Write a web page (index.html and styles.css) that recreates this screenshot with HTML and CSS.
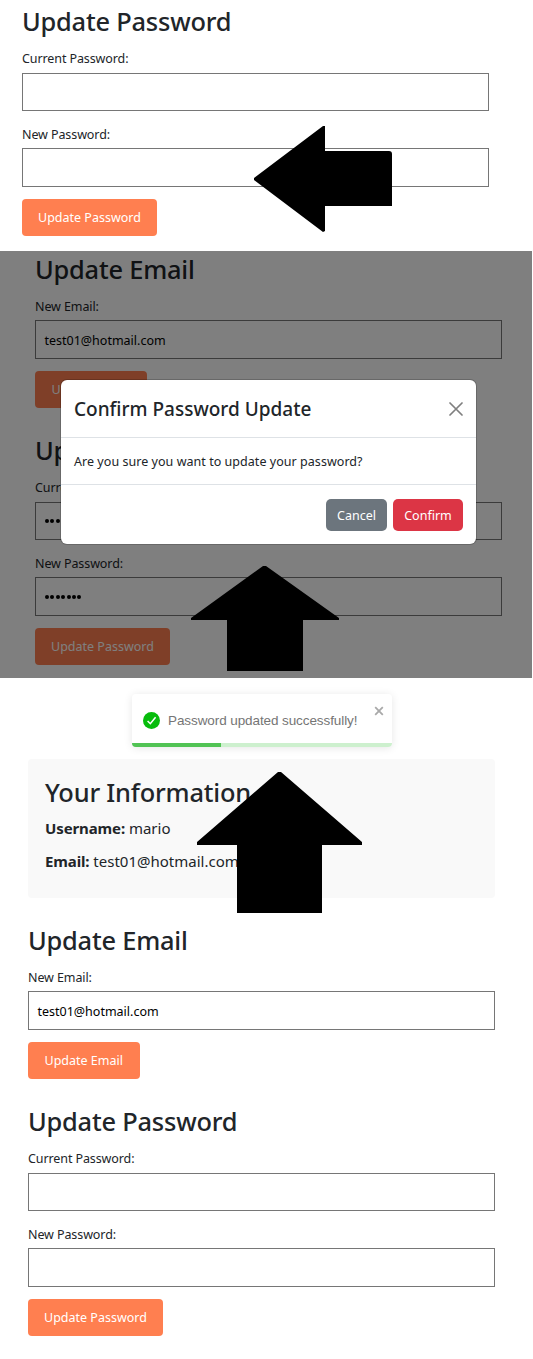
FILE: index.html
```html
<!DOCTYPE html>
<html lang="en">
<head>
<meta charset="utf-8">
<title>Account settings</title>
<link rel="stylesheet" href="styles.css">
</head>
<body>
<section class="step step-form">
  <form class="form">
    <h2 class="title">Update Password</h2>
    <label class="label">Current Password:</label>
    <div class="field field-current"></div>
    <label class="label label-next">New Password:</label>
    <div class="field"></div>
    <button class="btn" type="button">Update Password</button>
  </form>
  <svg class="arrow arrow-left" viewBox="0 0 140 110"><path d="M1 54 70 2 72 2V27H136Q139 27 139 30V82H72V107L70 108 1 56Z"/></svg>
</section>

<section class="step step-confirm">
  <form class="form">
    <h2 class="title">Update Email</h2>
    <label class="label">New Email:</label>
    <div class="field">test01@hotmail.com</div>
    <button class="btn btn-email" type="button">Update Email</button>
  </form>
  <form class="form form-next">
    <h2 class="title">Update Password</h2>
    <label class="label">Current Password:</label>
    <div class="field field-current"><i class="dots"><b></b><b></b><b></b><b></b><b></b><b></b><b></b></i></div>
    <label class="label label-next">New Password:</label>
    <div class="field"><i class="dots"><b></b><b></b><b></b><b></b><b></b><b></b><b></b></i></div>
    <button class="btn" type="button">Update Password</button>
  </form>
  <div class="backdrop"></div>
  <div class="modal">
    <header class="modal-head">
      <h3 class="modal-title">Confirm Password Update</h3>
      <svg class="close" viewBox="0 0 14 14"><path d="M1 1 13 13M13 1 1 13"/></svg>
    </header>
    <p class="modal-body">Are you sure you want to update your password?</p>
    <footer class="modal-foot">
      <button class="action action-cancel" type="button">Cancel</button>
      <button class="action action-confirm" type="button">Confirm</button>
    </footer>
  </div>
  <svg class="arrow arrow-mid" viewBox="0 0 150 108"><path d="M73 1H76L149 53V55H113V106H37V55H1V53Z"/></svg>
</section>

<section class="step step-done">
  <div class="toast">
    <svg class="check" viewBox="0 0 20 20"><circle cx="10" cy="10" r="10"/><path d="M5.4 10.6 8.6 13.8 14.8 6.2"/></svg>
    <span class="toast-text">Password updated successfully!</span>
    <svg class="toast-close" viewBox="0 0 10 10"><path d="M1.2 1.2 8.8 8.8M8.8 1.2 1.2 8.8"/></svg>
    <div class="progress"><div class="progress-bar"></div></div>
  </div>
  <div class="info">
    <h2 class="title">Your Information</h2>
    <p class="info-row"><strong>Username:</strong> mario</p>
    <p class="info-row"><strong>Email:</strong> test01@hotmail.com</p>
  </div>
  <form class="form">
    <h2 class="title">Update Email</h2>
    <label class="label">New Email:</label>
    <div class="field">test01@hotmail.com</div>
    <button class="btn btn-email" type="button">Update Email</button>
  </form>
  <form class="form form-next">
    <h2 class="title">Update Password</h2>
    <label class="label">Current Password:</label>
    <div class="field field-current"></div>
    <label class="label label-next">New Password:</label>
    <div class="field"></div>
    <button class="btn" type="button">Update Password</button>
  </form>
  <svg class="arrow arrow-low" viewBox="0 0 168 144"><path d="M82 1H85L166 71V74H126V142H41V74H1V71Z"/></svg>
</section>
</body>
</html>
```
FILE: styles.css
```css
* { box-sizing: border-box; }
body { margin: 0; background: #fff; color: #212529; font-family: "Noto Sans", "Open Sans", sans-serif; }
.step { position: relative; width: 532px; overflow: hidden; }
.step-form { height: 251px; padding: 5px 0 0 22px; }
.step-confirm { height: 427px; padding: 2px 0 0 35px; }
.step-done { width: 533px; height: 681px; padding: 16px 0 0 28px; }
.form { width: 467px; display: flex; flex-direction: column; align-items: flex-start; }
.form-next { margin-top: 26px; }
.title { margin: 0 0 12px; height: 32px; font-size: 25.4px; line-height: 32px; font-weight: 500; letter-spacing: -0.2px; white-space: nowrap; }
.label { height: 20px; margin-bottom: 3px; font-size: 12.5px; line-height: 20px; letter-spacing: -0.1px; }
.label-next { margin-top: 14px; }
.field { width: 100%; height: 39px; border: 1px solid #767676; display: flex; align-items: center; padding: 2px 8.5px 0; font-size: 12.5px; color: #000; background: #fff; }
.field-current { height: 38px; margin-top: 1px; }
.btn { height: 37px; margin-top: 12px; padding: 0 16px; border: 0; border-radius: 4px; background: #ff7f50; color: #fff; font: 12.5px "Noto Sans", sans-serif; }
.btn-email { width: 111.5px; }
.dots { display: flex; gap: 1.4px; padding: 0 0 2px 0.5px; }
.dots b { width: 4px; height: 4px; border-radius: 50%; background: #000; }
.backdrop { position: absolute; inset: 0; background: rgba(0, 0, 0, 0.5); }
.arrow { position: absolute; fill: #000; }
.arrow-left { left: 253px; top: 124px; width: 140px; height: 110px; }
.arrow-mid { left: 190px; top: 314px; width: 150px; height: 108px; }
.arrow-low { left: 196px; top: 93px; width: 168px; height: 144px; }
.modal { position: absolute; left: 61px; top: 129px; width: 415px; height: 164px; border-radius: 6px; background: #fff; box-shadow: 0 0 0 1px rgba(0, 0, 0, 0.18); }
.modal-head { height: 58px; padding: 0 13px; display: flex; align-items: center; justify-content: space-between; border-bottom: 1px solid #dee2e6; }
.modal-title { margin: 0; font-size: 19px; font-weight: 500; }
.close { width: 14px; height: 14px; fill: none; stroke: #7f7f7f; stroke-width: 1.7; stroke-linecap: round; }
.modal-body { margin: 0; height: 47px; padding: 0 13px; line-height: 47px; font-size: 12.5px; letter-spacing: 0.04px; border-bottom: 1px solid #dee2e6; }
.modal-foot { display: flex; justify-content: flex-end; gap: 6px; padding: 14px 13px 0; }
.action { height: 32px; border: 0; border-radius: 5px; color: #fff; font: 12.5px "Noto Sans", sans-serif; padding: 0; }
.action-cancel { width: 61px; background: #6c757d; }
.action-confirm { width: 70px; background: #dc3545; }
.toast { position: relative; width: 260px; height: 53px; margin-left: 104px; padding: 0 8px 1px 11px; display: flex; align-items: center; border-radius: 4px; box-shadow: 0 1px 9px rgba(0, 0, 0, 0.1); }
.check { width: 17px; height: 17px; fill: #07bc0c; }
.check path { fill: none; stroke: #fff; stroke-width: 1.8; }
.toast-text { margin-left: 8px; font: 13.5px "Liberation Sans", Arial, sans-serif; letter-spacing: -0.09px; color: #757575; white-space: nowrap; }
.toast-close { width: 10px; height: 10px; margin: -18px 0 0 auto; fill: none; stroke: #a9a9a9; stroke-width: 1.8; }
.progress { position: absolute; left: 0; right: 0; bottom: 0; height: 4px; background: #cdf0ce; border-radius: 0 0 4px 4px; overflow: hidden; }
.progress-bar { width: 89px; height: 100%; background: #51c354; }
.info { width: 467px; height: 139px; margin: 12px 0 26px; padding: 17px; border-radius: 4px; background: #f9f9f9; }
.info .title { margin-bottom: 8px; }
.info-row { margin: 0 0 9px; font-size: 15px; line-height: 24px; }
.info-row strong { letter-spacing: -0.12px; }
```
